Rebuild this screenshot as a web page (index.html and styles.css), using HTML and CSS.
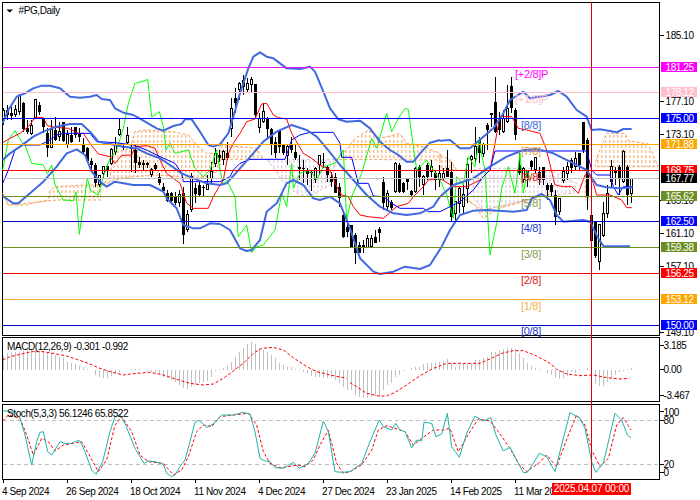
FILE: index.html
```html
<!DOCTYPE html>
<html lang="en">
<head>
<meta charset="utf-8">
<title>#PG,Daily</title>
<link rel="stylesheet" href="styles.css">
</head>
<body>
<div class="terminal">
<svg class="pane pane-main" viewBox="0 0 700 336" xmlns="http://www.w3.org/2000/svg">
<defs>
<pattern id="hatch-orange" width="12" height="15" patternUnits="userSpaceOnUse"><rect class="hatch-o" x="4" y="0" width="3" height="9"/></pattern>
<pattern id="hatch-thistle" width="12" height="15" patternUnits="userSpaceOnUse"><rect class="hatch-t" x="4" y="0" width="3" height="9"/></pattern>
</defs>
<path class="frame" d="M2.5 2.5H659.5V335.5H2.5Z"/>
<!-- Ichimoku cloud -->
<g transform="translate(0 70) scale(.33333)">
<path class="cloud-o" d="M8 370L25 405L85 405L100 398L145 390L150 362L165 350L250 345L302 345L302 390L170 390L100 398L25 405Z"/>
<path class="cloud-o" d="M302 350L330 320L340 250L390 235L405 185L440 180L520 185L565 195L590 225L620 250L660 250L660 300L620 320L570 325L480 315L400 320L345 330L310 345Z"/>
</g>
<g transform="translate(220 70) scale(.33333)">
<path class="cloud-o" d="M0 225L110 235L130 268L0 268Z"/>
<path class="cloud-t" d="M140 268L350 268L330 345L275 375L240 375L200 350L150 280Z"/>
<path class="cloud-o" d="M350 268L385 232L400 210L445 180L480 205L540 190L560 220L610 230L660 250L660 270Z"/>
</g>
<g transform="translate(440 70) scale(.33333)">
<path class="cloud-o" d="M0 255L30 270L50 300L0 295Z"/>
<path class="cloud-o" d="M60 380L100 400L130 445L180 415L300 380L330 372L240 395L130 420Z"/>
<path class="cloud-t" d="M100 300L120 295L320 295L410 340L400 370L330 375L240 395L130 420L100 385Z"/>
<path class="cloud-o" d="M465 290L470 265L490 215L500 190L555 190L565 212L625 222L650 280L655 290Z"/>
<path class="cloud-o" d="M436 310L446 310L446 390L436 390Z"/>
</g>
<!-- Candles -->
<g transform="translate(0 70) scale(.33333)">
<path class="wick" d="M10.5 115V165M22.5 105V150M34.5 110V150M46.5 105V140M58.5 72V135M70.5 95V185M82.5 150V192M94.5 150V195M106.5 88V145M118.5 95V135M130.5 143V190M142.5 175V262M154.5 150V235M166.5 140V212M178.5 155V212M190.5 155V215M202.5 180V235M214.5 170V220M226.5 170V205M238.5 175V215M250.5 205V250M262.5 230V275M274.5 265V300M286.5 280V350M298.5 315V350M310.5 288V325M322.5 285V320M334.5 235V285M346.5 200V255M358.5 145V198M370.5 225V240M382.5 170V222M394.5 225V305M406.5 225V310M418.5 260V295M430.5 270V300M442.5 275V295M454.5 295V320M466.5 280V300M478.5 310V345M490.5 340V365M502.5 360V395M514.5 365V395M526.5 365V405M538.5 360V410M550.5 350V522M562.5 420V486M574.5 310V425M586.5 340V400M598.5 335V378M610.5 345V380M622.5 315V360M634.5 275V340M646.5 235V290M658.5 240V275"/>
<path class="body-b" d="M22.5 120V135M34.5 130V138M70.5 98V178M82.5 175V185M118.5 105V125M130.5 145V170M142.5 190V235M166.5 180V210M190.5 155V212M214.5 195V215M226.5 172V195M238.5 190V200M250.5 222V245M262.5 235V272M274.5 272V285M286.5 285V340M322.5 288V300M370.5 228V235M394.5 230V236M406.5 240V280M418.5 275V285M430.5 280V285M442.5 280V284M466.5 285V296M478.5 320V340M490.5 350V362M502.5 368V392M514.5 370V392M526.5 378V398M550.5 370V495M586.5 355V372M598.5 345V375M610.5 350V353M658.5 255V265"/>
<path class="body-h" d="M7.5 122h6V150h-6zM43.5 120h6V135h-6zM55.5 78h6V125h-6zM91.5 168h6V190h-6zM103.5 90h6V143h-6zM151.5 180h6V232h-6zM175.5 185h6V200h-6zM199.5 195h6V225h-6zM295.5 318h6V345h-6zM307.5 290h6V310h-6zM331.5 240h6V280h-6zM343.5 225h6V245h-6zM355.5 180h6V195h-6zM379.5 198h6V218h-6zM451.5 298h6V315h-6zM535.5 375h6V398h-6zM559.5 435h6V480h-6zM571.5 320h6V420h-6zM619.5 345h6V358h-6zM631.5 305h6V325h-6zM643.5 250h6V280h-6z"/>
</g>
<g transform="translate(220 70) scale(.33333)">
<path class="wick" d="M10.5 240V285M22.5 215V270M34.5 85V200M46.5 55V130M58.5 35V90M70.5 15V75M82.5 25V70M94.5 20V70M106.5 42V140M118.5 130V190M130.5 100V160M142.5 140V205M154.5 175V255M166.5 200V265M178.5 180V250M190.5 225V255M202.5 225V285M214.5 200V250M226.5 225V270M238.5 255V330M250.5 270V340M262.5 295V345M274.5 300V362M286.5 290V340M298.5 255V315M310.5 250V295M322.5 285V335M334.5 305V350M346.5 310V370M358.5 340V410M370.5 430V504M382.5 450V500M394.5 465V530M406.5 490V582M418.5 515V550M430.5 510V550M442.5 495V535M454.5 495V535M466.5 480V520M478.5 470V515M490.5 320V420M502.5 360V420M514.5 390V420M526.5 275V370M538.5 280V370M550.5 335V370M562.5 325V360M574.5 360V380M586.5 290V370M598.5 285V350M610.5 315V375M622.5 280V330M634.5 270V320M646.5 300V360M658.5 285V350"/>
<path class="body-b" d="M22.5 250V265M46.5 85V100M70.5 30V50M106.5 42V135M142.5 143V178M154.5 178V225M166.5 215V250M178.5 182V230M190.5 225V250M214.5 225V240M226.5 245V265M238.5 292V296M250.5 295V298M262.5 303V312M274.5 305V308M310.5 275V278M322.5 290V315M334.5 320V335M346.5 322V370M358.5 350V385M370.5 435V500M382.5 470V485M394.5 465V530M406.5 495V550M418.5 525V550M430.5 525V535M466.5 500V518M478.5 478V488M490.5 335V400M514.5 395V415M538.5 285V365M550.5 338V365M562.5 328V335M574.5 362V375M598.5 290V320M622.5 285V320M646.5 310V330"/>
<path class="body-h" d="M7.5 245h6V270h-6zM31.5 115h6V175h-6zM55.5 40h6V60h-6zM79.5 40h6V60h-6zM91.5 30h6V45h-6zM115.5 145h6V172h-6zM127.5 125h6V155h-6zM199.5 230h6V258h-6zM283.5 295h6V330h-6zM295.5 258h6V285h-6zM439.5 505h6V532h-6zM451.5 505h6V530h-6zM499.5 370h6V410h-6zM523.5 280h6V365h-6zM583.5 295h6V365h-6zM607.5 320h6V345h-6zM631.5 290h6V305h-6zM655.5 310h6V330h-6z"/>
</g>
<g transform="translate(440 70) scale(.33333)">
<path class="wick" d="M10.5 295V330M22.5 240V320M34.5 275V455M46.5 395V455M58.5 350V430M70.5 345V430M82.5 265V400M94.5 255V310M106.5 170V280M118.5 200V280M130.5 220V260M142.5 160V240M154.5 130V170M166.5 20V190M178.5 125V195M190.5 120V190M202.5 45V160M214.5 22V130M226.5 115V210M238.5 250V315M250.5 290V340M262.5 300V350M274.5 270V300M286.5 260V310M298.5 290V345M310.5 290V345M322.5 340V390M334.5 340V380M346.5 360V465M358.5 385V435M370.5 290V340M382.5 275V330M394.5 265V310M406.5 245V300M418.5 250V300M430.5 155V250M442.5 205V420M454.5 435V515M466.5 455V565M478.5 465V600M490.5 395V500M502.5 345V445M514.5 270V355M526.5 290V345M538.5 285V375M550.5 240V340M562.5 285V405M574.5 325V400"/>
<path class="body-b" d="M22.5 295V320M34.5 305V440M118.5 210V250M142.5 165V180M154.5 130V135M166.5 95V185M178.5 145V180M214.5 48V115M226.5 120V195M238.5 285V310M262.5 300V320M274.5 272V290M298.5 305V330M310.5 292V330M322.5 345V360M334.5 345V365M346.5 375V440M394.5 270V295M418.5 250V285M430.5 155V240M442.5 210V380M454.5 435V512M466.5 455V558M526.5 300V310M538.5 290V325M562.5 290V375"/>
<path class="body-h" d="M7.5 310h6V325h-6zM43.5 395h6V430h-6zM55.5 355h6V400h-6zM67.5 375h6V410h-6zM79.5 285h6V355h-6zM91.5 260h6V270h-6zM103.5 230h6V265h-6zM127.5 225h6V250h-6zM187.5 145h6V185h-6zM199.5 115h6V155h-6zM247.5 295h6V330h-6zM283.5 262h6V300h-6zM355.5 385h6V425h-6zM367.5 305h6V332h-6zM379.5 290h6V310h-6zM403.5 265h6V290h-6zM475.5 465h6V575h-6zM487.5 430h6V498h-6zM499.5 370h6V430h-6zM511.5 290h6V335h-6zM547.5 245h6V335h-6zM571.5 325h6V370h-6z"/>
</g>
<!-- Indicator lines -->
<g transform="translate(0 70) scale(.33333)">
<path class="green" d="M8 300L25 210L45 182L65 215L75 225L95 280L130 285L142 312L155 285L165 345L190 390L220 392L228 365L238 493L262 325L272 362L295 375L310 320L330 265L350 240L370 175L385 100L405 40L435 32L443 28L455 140L465 135L478 125L490 170L498 240L510 220L525 250L565 240L585 295L610 320L630 300L650 240L660 300"/>
<path class="red" d="M8 218L30 205L60 190L85 170L105 143L130 143L142 167L165 172L205 175L235 190L250 190L270 220L295 252L330 260L345 280L365 256L395 255L405 230L440 227L465 235L480 270L500 310L540 340L560 400L580 415L625 415L640 380L660 345"/>
<path class="blue" d="M8 340L25 300L45 240L70 225L120 225L150 210L170 195L190 190L270 190L290 215L345 218L400 225L440 240L480 260L525 280L545 310L550 335L660 335"/>
<path class="band" d="M8 160L25 120L50 80L75 70L100 55L125 47L150 47L180 55L210 80L240 83L270 80L290 75L305 87L330 90L345 115L370 128L400 135L430 152L470 175L490 182L520 168L545 162L555 148L575 148L600 185L625 225L640 230L660 223"/>
<path class="band" d="M8 270L30 250L60 230L100 200L130 185L170 170L210 162L245 162L270 185L295 215L320 220L370 230L410 235L440 250L480 265L510 285L545 310L580 325L620 340L660 345"/>
<path class="band" d="M8 378L40 400L55 400L90 370L130 335L170 290L200 250L230 238L255 255L275 305L300 335L320 350L345 335L400 345L450 345L490 365L500 385L530 415L550 465L580 475L600 475L630 460L660 462"/>
</g>
<g transform="translate(220 70) scale(.33333)">
<path class="green" d="M0 300L10 345L20 330L45 380L55 500L80 465L95 548L110 530L130 525L165 480L185 370L200 410L215 280L220 355L240 310L270 300L290 330L310 290L345 280L370 240L380 450L395 380L425 310L455 205L470 235L500 130L515 185L535 145L555 115L565 118L580 230L590 300L620 270L640 300L660 330"/>
<path class="red" d="M0 345L10 330L25 250L40 220L60 190L80 155L105 147L125 102L140 100L160 135L175 143L200 147L215 190L250 250L275 265L300 285L330 300L350 350L365 375L385 380L400 410L420 435L445 440L490 445L530 410L565 400L580 380L610 350L625 330L660 325"/>
<path class="blue" d="M0 335L30 320L40 300L60 280L90 268L195 268L215 210L240 195L270 187L340 187L360 220L365 262L395 262L415 340L445 340L460 378L490 380L515 400L540 415L610 415L625 425L660 425"/>
<path class="band" d="M0 223L25 190L40 140L60 70L85 -5L100 -40L120 -53L140 -40L160 -35L200 -5L240 -3L270 -10L285 5L310 65L330 115L355 148L380 155L420 152L450 175L480 215L510 240L535 255L560 275L580 275L605 245L630 218L660 210"/>
<path class="band" d="M0 345L20 340L60 295L100 250L130 215L170 185L215 165L260 180L290 200L320 235L360 285L400 330L440 375L480 410L520 430L560 435L600 430L640 410L660 380"/>
<path class="band" d="M0 462L30 480L60 535L80 543L95 540L120 510L140 425L170 400L200 340L220 330L250 345L280 385L300 390L330 380L360 400L390 475L420 565L460 605L480 612L520 605L555 590L600 597L630 585L665 530"/>
</g>
<g transform="translate(440 70) scale(.33333)">
<path class="green" d="M0 330L20 375L40 445L50 320L70 345L85 260L105 290L118 205L125 255L135 300L150 555L170 460L185 355L205 290L225 370L240 250L250 370L262 300L270 330"/>
<path class="red" d="M0 325L40 350L80 350L120 330L150 300L165 220L180 140L215 140L235 175L260 180L300 190L318 235L345 345L370 350L395 350L415 370L435 315L445 310L460 340L470 375L510 375L545 390L560 413L575 413"/>
<path class="blue" d="M0 425L30 410L60 395L100 360L130 320L150 300L165 243L440 243L455 300L470 315L510 315L520 350L535 375L550 350L575 350"/>
<path class="band" d="M0 212L30 210L60 235L90 235L125 205L160 175L190 130L210 90L250 65L270 85L330 75L355 63L380 80L410 120L440 140L455 180L480 178L530 187L550 177L575 177"/>
<path class="band" d="M0 380L40 345L100 325L150 290L200 260L250 240L290 237L340 250L390 275L440 300L470 345L500 352L540 355L578 352"/>
</g>
<g transform="translate(350 170) scale(.33333)">
<path class="band" d="M275 230L300 180L330 135L370 122L410 120L490 125L530 120L545 85L575 72L600 90L620 135L640 155L700 150L720 155L745 205L760 228L840 229"/>
</g>
<!-- Murrey levels -->
<path class="lv magenta" d="M3 67.5H659"/>
<path class="lv pink" d="M3 92.5H659"/>
<path class="lv lblue" d="M3 118.5H659"/>
<path class="lv orange" d="M3 144.5H659"/>
<path class="lv lred" d="M3 170.5H659"/>
<path class="lv grey" d="M3 178.5H659"/>
<path class="lv olive" d="M3 196.5H659"/>
<path class="lv dblue" d="M3 221.5H659"/>
<path class="lv olive" d="M3 247.5H659"/>
<path class="lv lred" d="M3 273.5H659"/>
<path class="lv gold" d="M3 299.5H659"/>
<path class="lv dblue" d="M3 325.5H659"/>
<text class="lab" x="515" y="78" fill="#ff00ff">[+2/8]P</text>
<text class="lab" x="515" y="103" fill="#ffc0cb">[+1/8]P</text>
<text class="lab" x="521" y="129" fill="#4169e1">[8/8]</text>
<text class="lab" x="521" y="155" fill="#e8a33d">[7/8]</text>
<text class="lab" x="521" y="181" fill="#e02020">[6/8]</text>
<text class="lab" x="521" y="207" fill="#8a9a50">[5/8]</text>
<text class="lab" x="521" y="232" fill="#2040d0">[4/8]</text>
<text class="lab" x="521" y="258" fill="#8a9a50">[3/8]</text>
<text class="lab" x="521" y="284" fill="#e02020">[2/8]</text>
<text class="lab" x="521" y="310" fill="#f0b050">[1/8]</text>
<text class="lab" x="521" y="335" fill="#2040d0">[0/8]</text>
<path class="arrow" d="M6.5 9.5H13L9.7 12.5Z"/>
<text class="ui" x="18.5" y="14">#PG,Daily</text>
<!-- Price axis -->
<path class="tick" d="M660 35.5H664M660 101.5H664M660 134.5H664M660 200.5H664M660 233.5H664M660 266.5H664M660 332.5H664"/>
<text class="ui" x="665.5" y="39">185.10</text>
<text class="ui" x="665.5" y="105">177.10</text>
<text class="ui" x="665.5" y="138">173.10</text>
<text class="ui" x="665.5" y="204">165.10</text>
<text class="ui" x="665.5" y="237">161.10</text>
<text class="ui" x="665.5" y="270">157.10</text>
<text class="ui" x="665.5" y="336">149.10</text>
<g class="badges">
<rect class="magenta-f" x="661" y="62" width="36" height="10"/><text class="ui w" x="665.5" y="71">181.25</text>
<rect class="pink-f" x="661" y="87" width="36" height="10"/><text class="ui w" x="665.5" y="96">178.12</text>
<rect class="blue-f" x="661" y="113" width="36" height="10"/><text class="ui w" x="665.5" y="122">175.00</text>
<rect class="orange-f" x="661" y="139" width="36" height="10"/><text class="ui w" x="665.5" y="148">171.88</text>
<rect class="red-f" x="661" y="165" width="36" height="10"/><text class="ui w" x="665.5" y="174">168.75</text>
<rect class="black-f" x="661" y="173" width="36" height="10"/><text class="ui w" x="665.5" y="182">167.77</text>
<rect class="olive-f" x="661" y="191" width="36" height="10"/><text class="ui w" x="665.5" y="200">165.62</text>
<rect class="blue-f" x="661" y="216" width="36" height="10"/><text class="ui w" x="665.5" y="225">162.50</text>
<rect class="olive-f" x="661" y="242" width="36" height="10"/><text class="ui w" x="665.5" y="251">159.38</text>
<rect class="red-f" x="661" y="268" width="36" height="10"/><text class="ui w" x="665.5" y="277">156.25</text>
<rect class="orange-f" x="661" y="294" width="36" height="10"/><text class="ui w" x="665.5" y="303">153.12</text>
<rect class="blue-f" x="661" y="320" width="36" height="10"/><text class="ui w" x="665.5" y="329">150.00</text>
</g>
</svg>
<svg class="pane pane-macd" viewBox="0 336 700 67" xmlns="http://www.w3.org/2000/svg">
<path class="frame" d="M2.5 337.5H659.5V401.5H2.5Z"/>
<g transform="translate(0 335) scale(.33333)">
<path class="hist" d="M10.5 105V62M22.5 105V55M34.5 105V50M46.5 105V50M58.5 105V50M70.5 105V48M82.5 105V46M94.5 105V46M106.5 105V46M118.5 105V48M130.5 105V48M142.5 105V50M154.5 105V55M166.5 105V60M178.5 105V65M190.5 105V70M202.5 105V80M214.5 105V83M226.5 105V88M238.5 105V92M250.5 105V97M262.5 105V103M286.5 105V120M298.5 105V125M310.5 105V128M322.5 105V128M334.5 105V122M346.5 105V115M358.5 105V110M382.5 105V104M394.5 105V102M406.5 105V102M418.5 105V103M442.5 105V108M454.5 105V110M466.5 105V112M478.5 105V118M490.5 105V125M502.5 105V130M514.5 105V135M526.5 105V140M538.5 105V150M550.5 105V158M562.5 105V162M574.5 105V157M586.5 105V150M598.5 105V145M610.5 105V142M622.5 105V137M634.5 105V125M646.5 105V108M658.5 105V102M670.5 105V100M682.5 105V92M694.5 105V80M706.5 105V65M718.5 105V50M730.5 105V38M742.5 105V27M754.5 105V22M766.5 105V28M778.5 105V38M790.5 105V45M802.5 105V52M814.5 105V60M826.5 105V68M838.5 105V85M850.5 105V90M862.5 105V95M874.5 105V97M886.5 105V103M898.5 105V103M910.5 105V110M922.5 105V115M934.5 105V122M946.5 105V125M958.5 105V125M970.5 105V130M982.5 105V130M994.5 105V130M1006.5 105V135M1018.5 105V145M1030.5 105V155M1042.5 105V165"/>
<path class="sig" d="M8 75L30 65L60 58L95 50L130 50L170 57L200 63L230 73L265 85L300 100L330 110L370 120L410 115L450 112L490 120L530 133L570 145L610 150L640 147L670 130L700 108L730 85L760 55L785 40L820 37L850 45L880 68L920 95L950 110L990 120L1040 130"/>
</g>
<g transform="translate(350 335) scale(.33333)">
<path class="hist" d="M4.5 105V165M16.5 105V180M28.5 105V187M40.5 105V190M52.5 105V190M64.5 105V187M76.5 105V183M88.5 105V185M100.5 105V165M112.5 105V150M124.5 105V145M136.5 105V125M148.5 105V120M160.5 105V107M184.5 105V100M196.5 105V97M208.5 105V95M220.5 105V88M232.5 105V85M244.5 105V85M256.5 105V85M268.5 105V80M280.5 105V78M292.5 105V72M304.5 105V85M316.5 105V95M328.5 105V90M340.5 105V85M352.5 105V85M364.5 105V85M376.5 105V75M388.5 105V75M400.5 105V68M412.5 105V65M424.5 105V52M436.5 105V50M448.5 105V45M460.5 105V42M472.5 105V40M484.5 105V38M496.5 105V42M508.5 105V55M520.5 105V70M532.5 105V85M544.5 105V92M556.5 105V100M568.5 105V103M592.5 105V115M604.5 105V120M616.5 105V130M628.5 105V132M640.5 105V128M652.5 105V122M664.5 105V110M676.5 105V115M688.5 105V102M712.5 105V100M736.5 105V148M748.5 105V152M760.5 105V152M772.5 105V140M784.5 105V130M796.5 105V120M808.5 105V112M820.5 105V108M832.5 105V102M844.5 105V100"/>
<path class="sig" d="M0 143L20 155L50 175L85 183L110 183L135 172L170 150L210 122L250 100L290 85L330 85L390 85L420 72L455 55L490 47L520 47L560 63L600 85L620 103L650 117L690 122L730 120L770 128L810 132L838 130"/>
</g>
<text class="ui" x="7" y="350">MACD(12,26,9) -0.301 -0.992</text>
<path class="tick" d="M660 345.5H664M660 369.5H664M660 395.5H664"/>
<text class="ui" x="663.5" y="349">3.185</text>
<text class="ui" x="663.5" y="373">0.00</text>
<text class="ui" x="663.5" y="399">-3.467</text>
</svg>
<svg class="pane pane-stoch" viewBox="0 403 700 77" xmlns="http://www.w3.org/2000/svg">
<path class="frame" d="M2.5 404.5H659.5V479.5H2.5Z"/>
<path class="level" d="M3 420.5H659M3 464.5H659"/>
<g transform="translate(0 335) scale(.33333)">
<path class="sig" d="M8 258L25 240L60 250L80 300L100 360L125 310L145 320L165 348L190 330L220 325L245 320L265 355L295 410L320 375L345 270L365 245L395 290L420 360L445 380L490 385L520 420L545 405L565 365L590 290L610 270L635 275L660 245L700 240L745 235L770 270L790 350L810 385L840 398L865 395L890 390L915 395L940 375L960 330L985 285L1010 385L1030 415L1050 410"/>
<path class="teal" d="M8 228L22 228L45 232L60 250L75 300L95 390L110 320L120 292L130 290L143 350L155 360L180 320L195 325L215 325L230 317L240 318L255 350L275 405L288 418L308 380L330 290L345 245L360 240L375 265L405 340L432 385L445 378L465 380L490 388L500 415L515 425L525 420L540 395L555 375L570 320L585 262L597 256L620 277L640 267L665 240L700 240L730 232L750 237L765 290L780 370L795 378L810 380L825 398L850 400L880 382L898 400L925 385L945 355L970 258L985 290L1005 410L1025 412L1050 410"/>
</g>
<g transform="translate(350 335) scale(.33333)">
<path class="sig" d="M0 410L35 390L65 345L85 285L110 272L135 280L165 290L190 330L215 310L250 285L280 285L300 280L325 350L360 290L385 252L420 258L445 290L480 340L505 385L530 410L565 385L590 360L620 395L655 300L680 240L705 270L725 345L750 395L775 370L800 270L820 248L843 285"/>
<path class="teal" d="M0 410L35 385L60 320L88 255L100 275L125 285L137 265L150 285L165 290L185 338L200 315L215 318L222 262L245 265L258 305L275 297L292 235L305 335L328 367L350 295L375 243L400 258L422 248L438 300L460 348L480 337L495 365L520 413L532 412L550 385L568 355L590 365L615 410L635 330L660 233L690 250L705 280L725 380L737 412L760 385L795 235L815 255L832 300L843 308"/>
</g>
<text class="ui" x="7" y="417">Stoch(5,3,3) 56.1246 65.8522</text>
<path class="tick" d="M660 411.5H664M660 420.5H664M660 464.5H664M660 472.5H664"/>
<text class="ui" x="663.5" y="415.5">100</text>
<text class="ui" x="663.5" y="424">80</text>
<text class="ui" x="663.5" y="468">20</text>
<text class="ui" x="663.5" y="476">0</text>
</svg>
<div class="time-axis">
<span class="time-cell">4 Sep 2024</span>
<span class="time-cell">26 Sep 2024</span>
<span class="time-cell">18 Oct 2024</span>
<span class="time-cell">11 Nov 2024</span>
<span class="time-cell">4 Dec 2024</span>
<span class="time-cell">27 Dec 2024</span>
<span class="time-cell">23 Jan 2025</span>
<span class="time-cell">14 Feb 2025</span>
<span class="time-cell">11 Mar 2025</span>
</div>
<div class="cursor-line"></div>
<div class="cursor-badge">2025.04.07 00:00</div>
</div>
</body>
</html>
```
FILE: styles.css
```css
html, body {
  margin: 0;
  padding: 0;
  background: #fff;
}

.terminal {
  position: relative;
  width: 700px;
  height: 500px;
  display: flex;
  flex-direction: column;
  overflow: hidden;
  font-family: "Liberation Sans", Arial, sans-serif;
}

.pane {
  display: block;
  width: 700px;
  flex: none;
  overflow: visible;
}
.pane-main { height: 336px; }
.pane-macd { height: 67px; }
.pane-stoch { height: 77px; }

.frame { fill: none; stroke: #000; stroke-width: 1; shape-rendering: crispEdges; }

.hatch-o { fill: #f4a460; }
.hatch-t { fill: #d8bfd8; }
.cloud-o, .cloud-t { stroke-width: 1; vector-effect: non-scaling-stroke; stroke-dasharray: 3 2; }
.cloud-o { fill: url(#hatch-orange); stroke: #f4a460; }
.cloud-t { fill: url(#hatch-thistle); stroke: #d8bfd8; }

.wick, .body-b, .body-h { vector-effect: non-scaling-stroke; shape-rendering: crispEdges; }
.wick { fill: none; stroke: #000; stroke-width: 1; }
.body-b { fill: none; stroke: #000; stroke-width: 3; }
.body-h { fill: #fff; stroke: #000; stroke-width: 1; }

.green, .red, .blue, .band, .hist, .sig, .teal {
  fill: none;
  vector-effect: non-scaling-stroke;
}
.green { stroke: #00ff00; stroke-width: 1; }
.red { stroke: #ff0000; stroke-width: 1; }
.blue { stroke: #0000ff; stroke-width: 1; }
.band { stroke: #4169e1; stroke-width: 2; stroke-linejoin: round; }
.hist { stroke: #c0c0c0; stroke-width: 1; shape-rendering: crispEdges; }
.sig { stroke: #ff0000; stroke-width: 1; stroke-dasharray: 3 2; }
.teal { stroke: #20b2aa; stroke-width: 1; }

.lv { fill: none; stroke-width: 1; shape-rendering: crispEdges; }
.magenta { stroke: #e815e8; }
.pink { stroke: #ffc0cb; }
.lblue { stroke: #0000ff; }
.orange { stroke: #ffa500; }
.lred { stroke: #ff0000; }
.grey { stroke: #c0c0c0; }
.olive { stroke: #6b8e23; }
.dblue { stroke: #0000cd; }
.gold { stroke: #f0a830; }

.level { fill: none; stroke: #c0c0c0; stroke-width: 1; stroke-dasharray: 4 3; shape-rendering: crispEdges; }
.tick { fill: none; stroke: #000; stroke-width: 1; shape-rendering: crispEdges; }
.arrow { fill: #000; }

.ui {
  font-family: "Liberation Sans", Arial, sans-serif;
  font-size: 10px;
  letter-spacing: -0.4px;
  fill: #000;
}
.ui.w { fill: #fff; }
.lab {
  font-family: "Liberation Sans", Arial, sans-serif;
  font-size: 11px;
  letter-spacing: -0.3px;
}

.magenta-f { fill: #ff00ff; }
.pink-f { fill: #ffc0cb; }
.blue-f { fill: #0000ff; }
.orange-f { fill: #ffa500; }
.red-f { fill: #ff0000; }
.black-f { fill: #000; }
.olive-f { fill: #6b8e23; }

.time-axis {
  display: flex;
  padding-left: 2px;
  height: 20px;
  flex: none;
}
.time-cell {
  position: relative;
  width: 64px;
  flex: none;
  padding-top: 6px;
  font-size: 10px;
  line-height: 11px;
  letter-spacing: -0.4px;
  white-space: nowrap;
  color: #000;
}
.time-cell::before {
  content: "";
  position: absolute;
  left: 1px;
  top: 0;
  width: 1px;
  height: 3px;
  background: #000;
}

.cursor-line {
  position: absolute;
  left: 591px;
  top: 2px;
  width: 1px;
  height: 477px;
  background: #e00000;
}
.cursor-badge {
  position: absolute;
  left: 552px;
  top: 483px;
  width: 79px;
  height: 12px;
  background: #ff0000;
  color: #fff;
  font-size: 10px;
  line-height: 12px;
  letter-spacing: -0.15px;
  text-align: center;
  white-space: nowrap;
}
```
